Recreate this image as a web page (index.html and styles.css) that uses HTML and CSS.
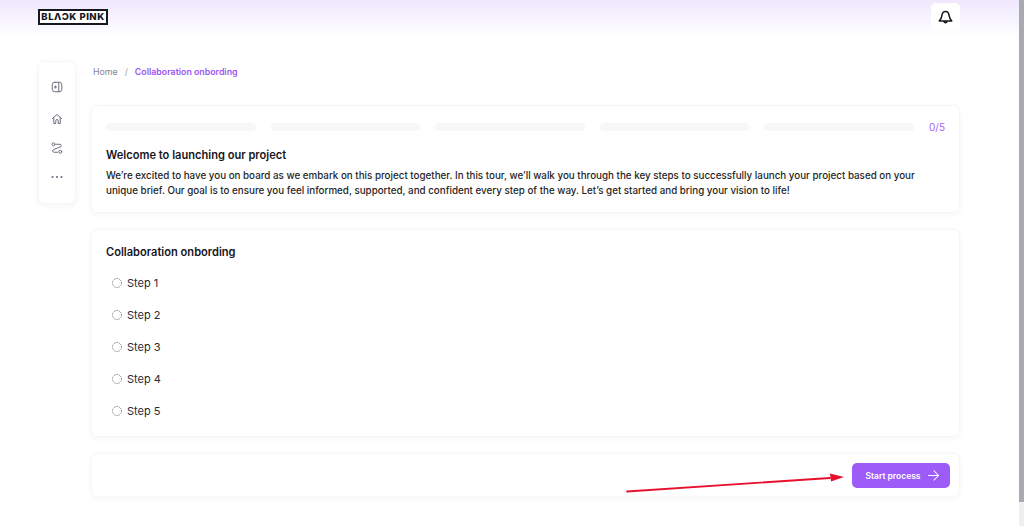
FILE: index.html
```html
<!DOCTYPE html>
<html lang="en">
<head>
<meta charset="utf-8">
<title>Collaboration onbording</title>
<link rel="stylesheet" href="styles.css">
</head>
<body>
<div class="page">
  <header class="topbar">
    <div class="logo">BLΛƆK PINK</div>
    <button class="bell" aria-label="Notifications">
      <svg width="15" height="15" viewBox="0 0 24 24" fill="none" stroke="#16161d" stroke-width="2.400" stroke-linejoin="round" stroke-linecap="round"><path d="M12 2.500c-3.400 0-5.300 2.800-5.700 6.200-.4 3.300-1.500 5.800-4.300 8.800h20c-2.800-3-3.900-5.500-4.300-8.800C17.300 5.300 15.400 2.500 12 2.500z"/><path d="M9.500 18.500a2.600 2.600 0 0 0 5 0" fill="#16161d"/></svg>
    </button>
  </header>
  <div class="body">
    <nav class="rail">
      <svg class="ic first" viewBox="0 0 24 24" fill="none" stroke="#6f6f80" stroke-width="2" stroke-linejoin="round" stroke-linecap="round"><rect x="2.500" y="2.500" width="19" height="19" rx="5"/><path d="M15.500 2.500v19"/><path d="M8.500 10l2.500 2-2.500 2z" fill="#6f6f80"/></svg>
      <svg class="ic" viewBox="0 0 24 24" fill="none" stroke="#6f6f80" stroke-width="2" stroke-linejoin="round" stroke-linecap="round"><path d="M3 11l9-8 9 8"/><path d="M5.500 9.500V21h4v-5.500a2.500 2.500 0 0 1 5 0V21h4V9.500"/></svg>
      <svg class="ic" viewBox="0 0 24 24" fill="none" stroke="#6f6f80" stroke-width="2" stroke-linecap="round" stroke-linejoin="round"><circle cx="5" cy="4.500" r="3"/><circle cx="18.500" cy="19.500" r="3"/><path d="M11 4.500h7a2.800 2.800 0 0 1 1.500 5L5.500 15a2.800 2.800 0 0 0 1 5.500H13"/></svg>
      <svg class="ic" viewBox="0 0 24 24" fill="#6f6f80"><circle cx="3" cy="12" r="2.200"/><circle cx="12" cy="12" r="2.200"/><circle cx="21" cy="12" r="2.200"/></svg>
    </nav>
    <main class="content">
      <div class="crumbs"><span class="home">Home</span><span class="sep">/</span><span class="current">Collaboration onbording</span></div>
      <section class="card intro">
        <div class="progress">
          <div class="bars"><i></i><i></i><i></i><i></i><i></i></div>
          <span class="count">0/5</span>
        </div>
        <h2>Welcome to launching our project</h2>
        <p>We’re excited to have you on board as we embark on this project together. In this tour, we’ll walk you through the key steps to successfully launch your project based on your unique brief. Our goal is to ensure you feel informed, supported, and confident every step of the way. Let’s get started and bring your vision to life!</p>
      </section>
      <section class="card steps">
        <h2>Collaboration onbording</h2>
        <ul>
          <li><svg class="dot" viewBox="0 0 20 20"><circle cx="10" cy="10" r="9"/></svg>Step 1</li>
          <li><svg class="dot" viewBox="0 0 20 20"><circle cx="10" cy="10" r="9"/></svg>Step 2</li>
          <li><svg class="dot" viewBox="0 0 20 20"><circle cx="10" cy="10" r="9"/></svg>Step 3</li>
          <li><svg class="dot" viewBox="0 0 20 20"><circle cx="10" cy="10" r="9"/></svg>Step 4</li>
          <li><svg class="dot" viewBox="0 0 20 20"><circle cx="10" cy="10" r="9"/></svg>Step 5</li>
        </ul>
      </section>
      <section class="card action">
        <button class="start">Start process
          <svg width="11" height="11" viewBox="0 0 24 24" fill="none" stroke="#fff" stroke-width="2.200" stroke-linecap="round" stroke-linejoin="round"><path d="M1 12h22M13 2l10 10-10 10"/></svg>
        </button>
      </section>
    </main>
  </div>
  <svg class="annotation" width="230" height="24" viewBox="0 0 230 24"><path d="M2 20.500L205 7" stroke="#e8112d" stroke-width="1.800" stroke-linecap="round"/><path d="M219 6L205 2.500L206 10.500z" fill="#e8112d"/></svg>
</div>
<div class="scrollbar"><div class="thumb"></div></div>
</body>
</html>
```

FILE: styles.css
```css
* { box-sizing: border-box; }
html, body { margin: 0; height: 526px; overflow: hidden; background: #fff; }
body { font-family: Inter, "Liberation Sans", sans-serif; color: #16161d; }
.page { position: relative; width: 1020px; height: 526px; }
.topbar {
  height: 38px;
  padding: 3px 60px 0 38px;
  display: flex;
  justify-content: space-between;
  align-items: flex-start;
  background: linear-gradient(180deg, #efe8fd 0%, #ffffff 100%);
}
.logo {
  margin-top: 6px;
  width: 70px;
  height: 16px;
  border: 2px solid #17171f;
  font: 800 9.500px/12px Inter, sans-serif;
  letter-spacing: 0.5px;
  text-align: center;
  white-space: nowrap;
  color: #17171f;
  background: #fff;
}
.bell {
  width: 29px;
  height: 28px;
  padding: 0;
  border: 0;
  border-radius: 5px;
  background: #fff;
  display: flex;
  align-items: center;
  justify-content: center;
}
.body { display: flex; padding: 23px 60px 0 38px; gap: 15px; align-items: flex-start; }
.rail {
  width: 38px;
  height: 143px;
  border-radius: 6px;
  background: #fff;
  border: 1px solid #f7f7f9;
  box-shadow: 0 2px 6px rgba(40, 40, 70, .05);
  display: flex;
  flex-direction: column;
  align-items: center;
  padding-top: 19px;
  gap: 17px;
}
.ic { width: 12px; height: 12px; }
.ic.first { margin-bottom: 3px; }
.content { flex: 1; min-width: 0; }
.crumbs { height: 22px; padding: 1px 2px 0; font-size: 8.800px; line-height: 20px; display: flex; }
.home { color: #85858f; }
.sep { color: #9a9aa3; margin: 0 7px; }
.current { color: #9d55f7; font-weight: 600; }
.card {
  background: #fff;
  border: 1px solid #f7f7f9;
  border-radius: 6px;
  box-shadow: 0 2px 6px rgba(40, 40, 70, .04);
  margin-bottom: 16px;
}
.intro { margin-top: 22px; height: 108px; padding: 14px 14px 0; }
.progress { display: flex; align-items: center; height: 13px; }
.bars { flex: 1; display: flex; gap: 15px; }
.bars i { flex: 1; height: 8px; border-radius: 4px; background: #f6f7f9; }
.count { width: 31px; text-align: right; font-size: 10px; color: #a55ff9; }
h2 { margin: 0; font-size: 11.100px; font-weight: 600; line-height: 16px; color: #16161d; }
.intro h2 { margin-top: 14px; }
.intro p { margin: 5px 0 0; font-size: 9.800px; font-weight: 500; line-height: 15px; color: #1f1f27; }
.steps { height: 208px; padding: 14px 14px 0; }
ul { list-style: none; margin: 7px 0 0; padding: 0 0 0 6px; }
li { height: 32px; display: flex; align-items: center; gap: 5px; font-size: 11px; color: #2a2a32; }
.dot { width: 10px; height: 10px; fill: none; stroke: #5f5f70; stroke-width: 1.600; stroke-dasharray: 2.200 1.570; }
.action { height: 44px; margin-bottom: 0; padding: 9px 9px 0 0; display: flex; justify-content: flex-end; align-items: flex-start; }
.start {
  width: 98px;
  height: 25px;
  padding: 0 0 0 2px;
  border: 0;
  border-radius: 5px;
  background: #9d5cf8;
  color: #fff;
  font: 600 8.500px Inter, sans-serif;
  display: flex;
  align-items: center;
  justify-content: center;
  gap: 7px;
}
.annotation { position: absolute; left: 625px; top: 471px; }
.scrollbar { position: absolute; right: 0; top: 0; width: 5px; height: 526px; background: #efeff1; }
.thumb { height: 502px; background: #a9a9b0; }
```
